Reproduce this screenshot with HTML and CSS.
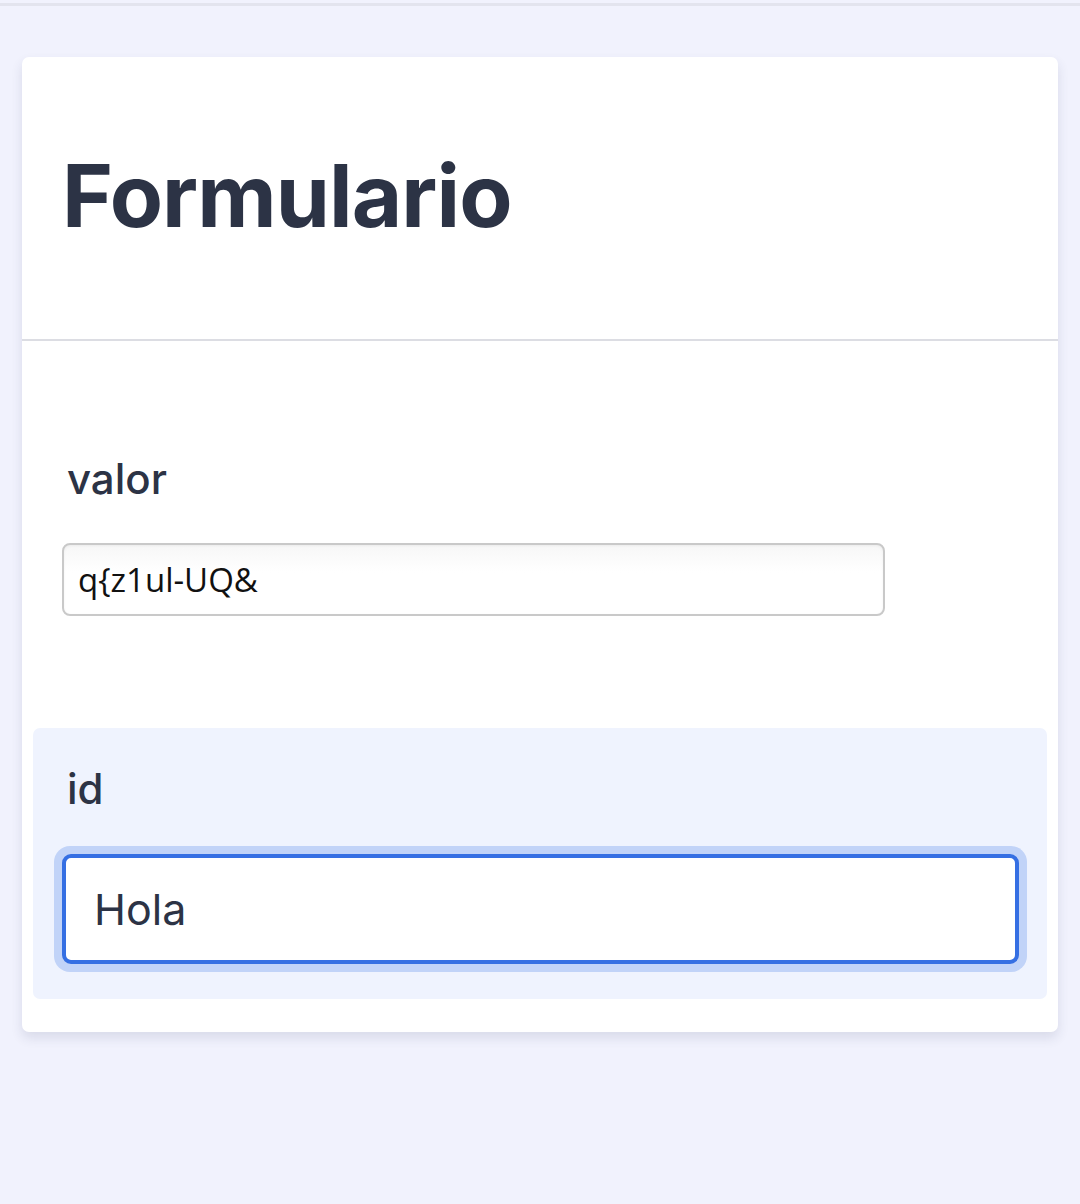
FILE: index.html
```html
<!DOCTYPE html>
<html lang="es">
<head>
<meta charset="utf-8">
<title>Formulario</title>
<link rel="stylesheet" href="styles.css">
</head>
<body>
<div class="topbar"></div>
<main class="page">
  <section class="card">
    <header class="card-header">
      <h1 class="title">Formulario</h1>
    </header>
    <div class="card-body">
      <div class="field">
        <label class="label" for="valor">valor</label>
        <input class="input-plain" id="valor" type="text" value="q{z1ul-UQ&amp;">
      </div>
      <div class="field field-active">
        <label class="label" for="id">id</label>
        <div class="focus-ring">
          <div class="input-focus" id="id">Hola</div>
        </div>
      </div>
    </div>
  </section>
</main>
</body>
</html>
```
FILE: styles.css
```css
* { box-sizing: border-box; }
html, body { margin: 0; padding: 0; }
body {
  background: #f1f2fd;
  font-family: Inter, "Noto Sans", sans-serif;
  color: #2c3345;
  min-height: 1204px;
}
.topbar {
  height: 6px;
  border-top: 3px solid #f1f2fd;
  background: #e3e4ee;
}
.page {
  padding: 51px 22px 0 22px;
}
.card {
  background: #ffffff;
  border-radius: 7px;
  box-shadow: 0 6px 12px rgba(40, 50, 90, 0.12);
  padding-bottom: 33px;
}
.card-header {
  height: 284px;
  border-bottom: 2px solid #dcdde3;
  display: flex;
  align-items: center;
  padding-left: 40px;
}
.title {
  margin: 0;
  font-size: 87px;
  font-weight: 700;
  letter-spacing: -0.9px;
  line-height: 1;
  color: #2c3345;
  padding-bottom: 6px;
}
.card-body {
  padding: 112px 11px 0 11px;
}
.field {
  display: flex;
  flex-direction: column;
  padding: 0 34px;
}
.label {
  font-size: 42px;
  font-weight: 500;
  line-height: 52px;
  color: #2c3345;
}
.input-plain {
  margin-top: 38px;
  margin-left: -5px;
  width: 823px;
  height: 73px;
  border: 2px solid #c9c9c9;
  border-radius: 8px;
  background: linear-gradient(#f7f7f7, #ffffff 40%);
  box-shadow: inset 0 1px 3px rgba(0, 0, 0, 0.05);
  font-family: "Open Sans", "Noto Sans", sans-serif;
  font-size: 33px;
  color: #111111;
  padding: 0 14px;
  outline: none;
}
.field-active {
  margin-top: 112px;
  background: #eff3fe;
  border-radius: 7px;
  padding: 35px 20px 27px 21px;
}
.field-active .label {
  padding-left: 13px;
}
.focus-ring {
  margin-top: 31px;
  border-radius: 16px;
  background: #c1d3f8;
  padding: 8px;
}
.input-focus {
  height: 110px;
  border: 4px solid #356fe3;
  border-radius: 9px;
  background: #ffffff;
  display: flex;
  align-items: center;
  padding-left: 28px;
  font-size: 43px;
  font-weight: 400;
  color: #2c3345;
}
```
